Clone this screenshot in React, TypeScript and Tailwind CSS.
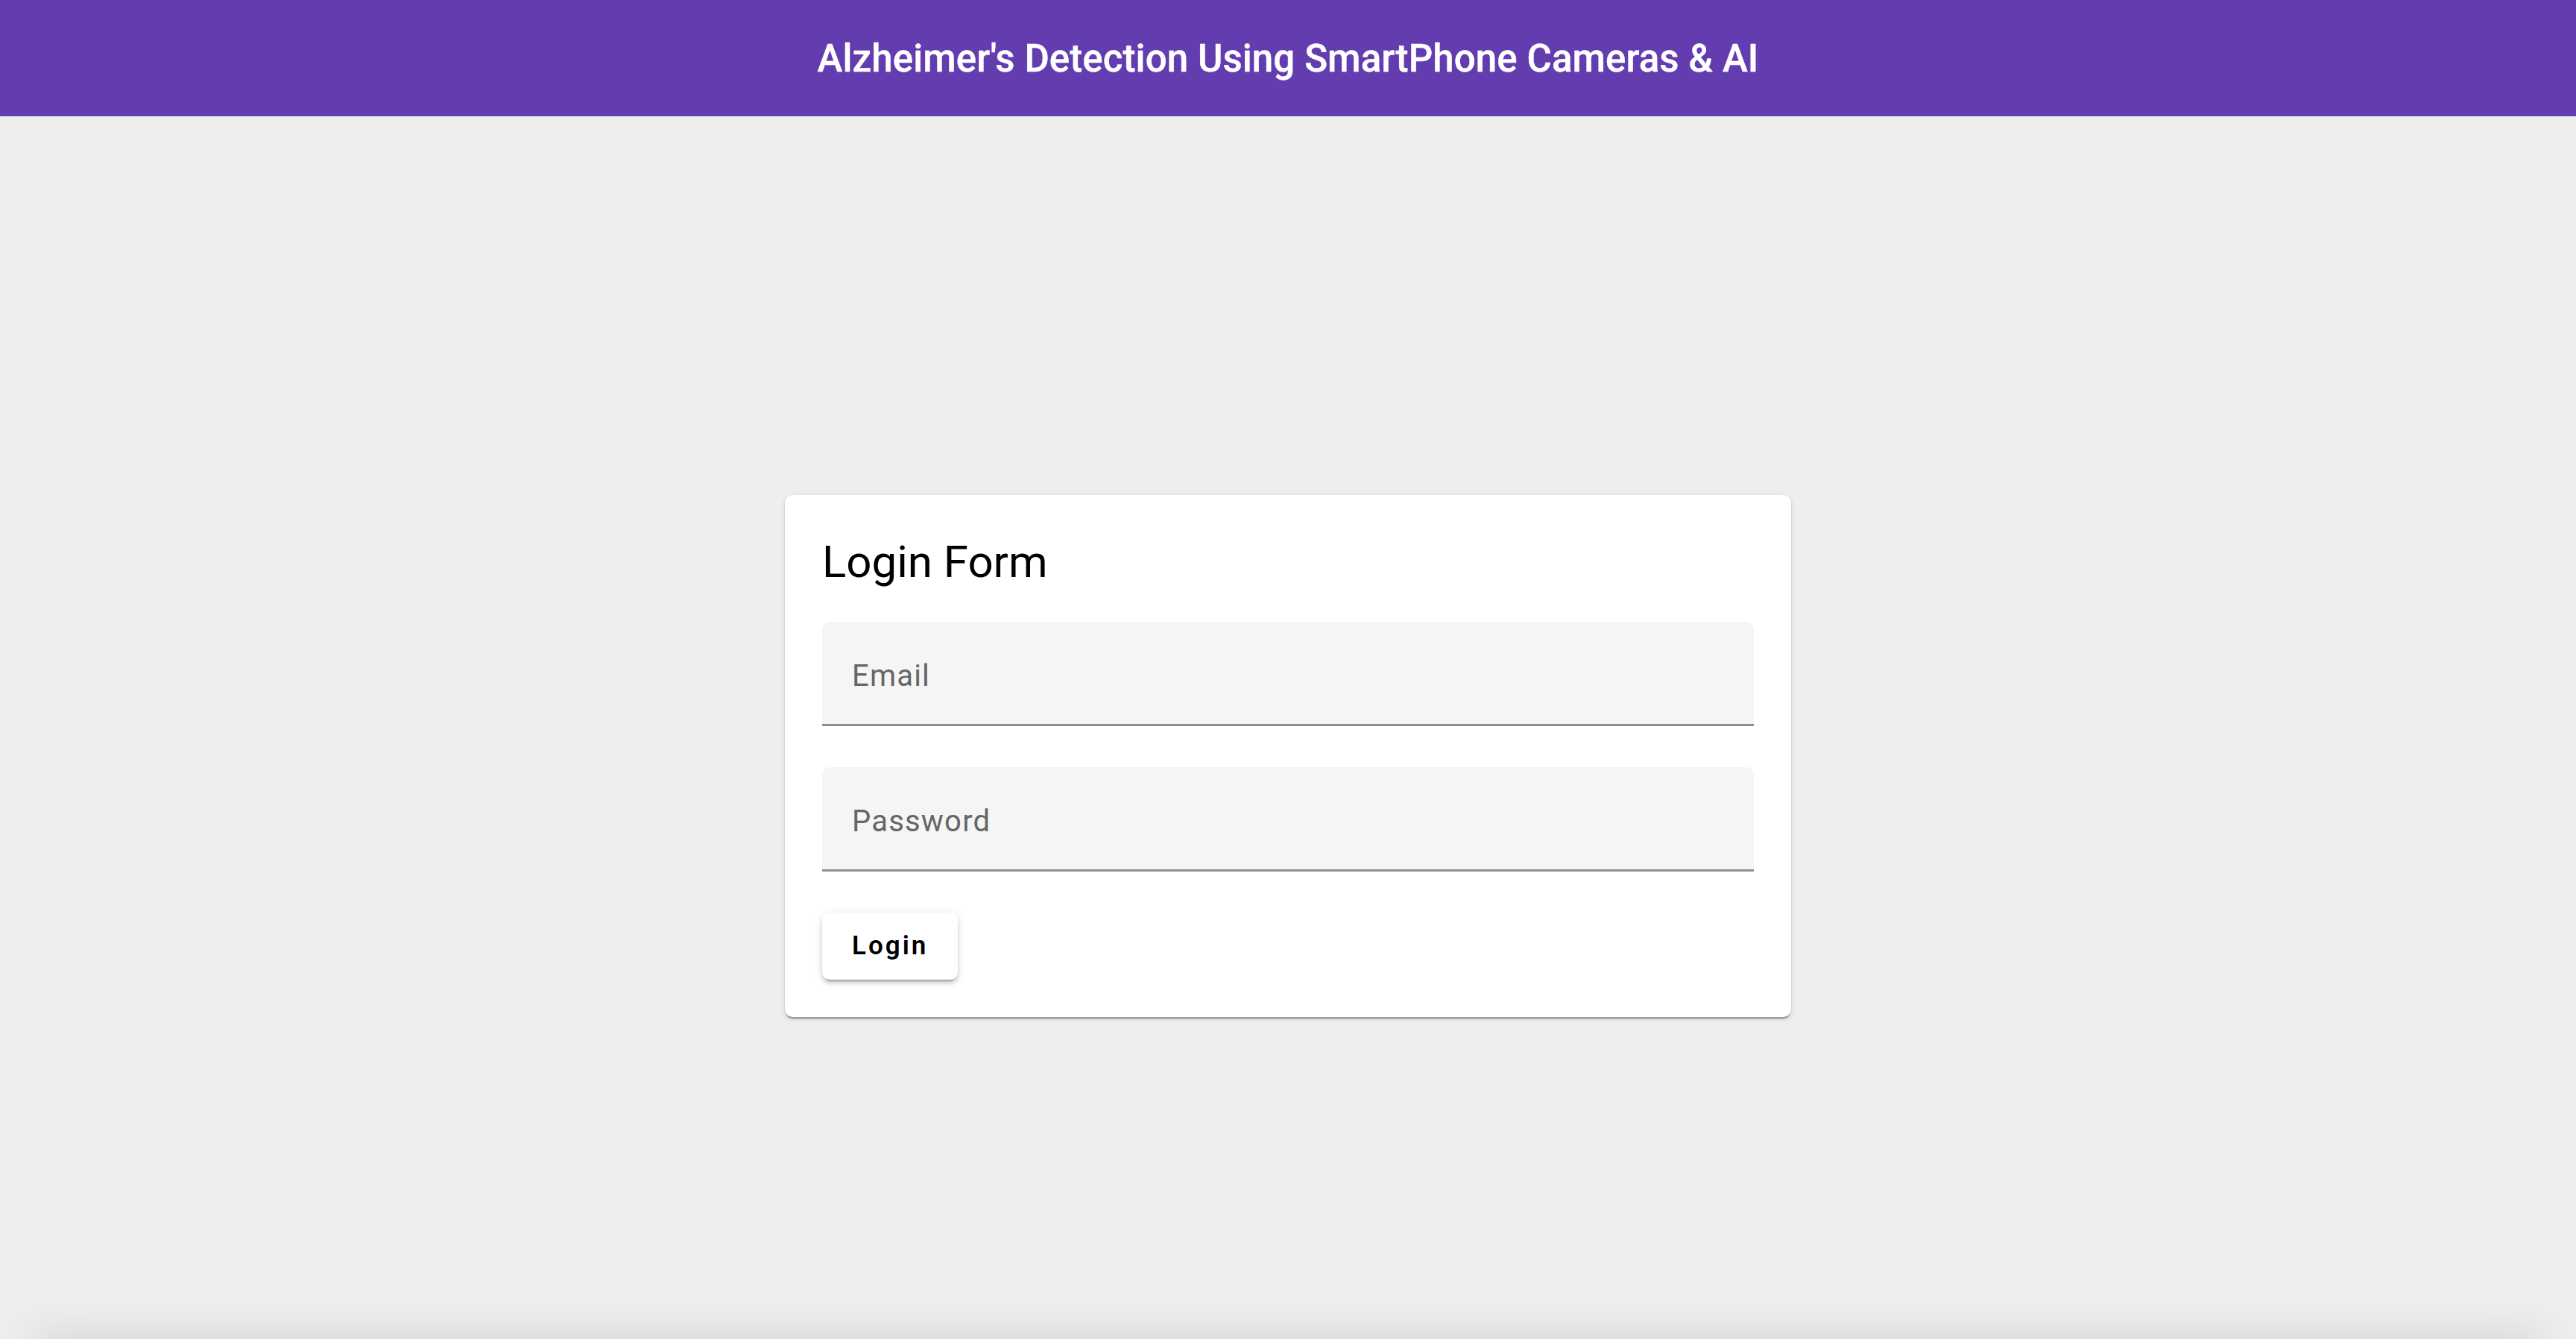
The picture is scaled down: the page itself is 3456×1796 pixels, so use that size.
export default function App() {
  return (
    <div className="h-screen flex flex-col bg-[#eeeeee] font-['Roboto','Liberation_Sans',sans-serif] overflow-hidden">
      <header className="h-[156px] shrink-0 bg-[#633db0] flex items-center justify-center">
        <h1 className="text-white text-[51px] font-medium leading-none tracking-[0.1px] [-webkit-text-stroke:0.4px_white]">
          Alzheimer's Detection Using SmartPhone Cameras &amp; AI
        </h1>
      </header>

      <main className="flex-1 flex justify-center pt-[508px]">
        <form className="w-[1350px] h-fit bg-white rounded-[10px] px-[50px] pt-[50px] pb-[50px] shadow-[0_5px_2px_-2px_rgba(0,0,0,0.2),0_2px_2px_0_rgba(0,0,0,0.14),0_2px_7px_0_rgba(0,0,0,0.12)]">
          <h2 className="text-[60px] leading-[80px] font-normal text-black">Login Form</h2>

          <div className="mt-[40px] flex flex-col gap-[55px]">
            <Field label="Email" type="email" />
            <Field label="Password" type="password" />
          </div>

          <button
            type="button"
            className="mt-[55px] h-[90px] px-[40px] bg-white rounded-[10px] text-black text-[35px] font-semibold tracking-[3px] shadow-[0_7px_2px_-5px_rgba(0,0,0,0.2),0_5px_5px_0_rgba(0,0,0,0.14),0_2px_12px_0_rgba(0,0,0,0.12)]"
          >
            Login
          </button>
        </form>
      </main>

      <div className="h-[60px] shrink-0 overflow-hidden flex flex-col justify-end">
        <div className="h-[40px] -mb-[40px] mx-[40px] shrink-0 rounded-[40px] bg-[#eeeeee] shadow-[0_0_60px_rgba(0,0,0,0.14)]" />
      </div>
    </div>
  );
}

function Field({ label, type }: { label: string; type: string }) {
  return (
    <div className="h-[140px] bg-[#f5f5f5] rounded-t-[10px] border-b-[3px] border-[#8f8f8f] flex items-center px-[40px] pt-[8px]">
      <input
        type={type}
        placeholder={label}
        className="w-full bg-transparent outline-none text-[40px] tracking-[1.2px] text-black placeholder:text-[#666666]"
      />
    </div>
  );
}
